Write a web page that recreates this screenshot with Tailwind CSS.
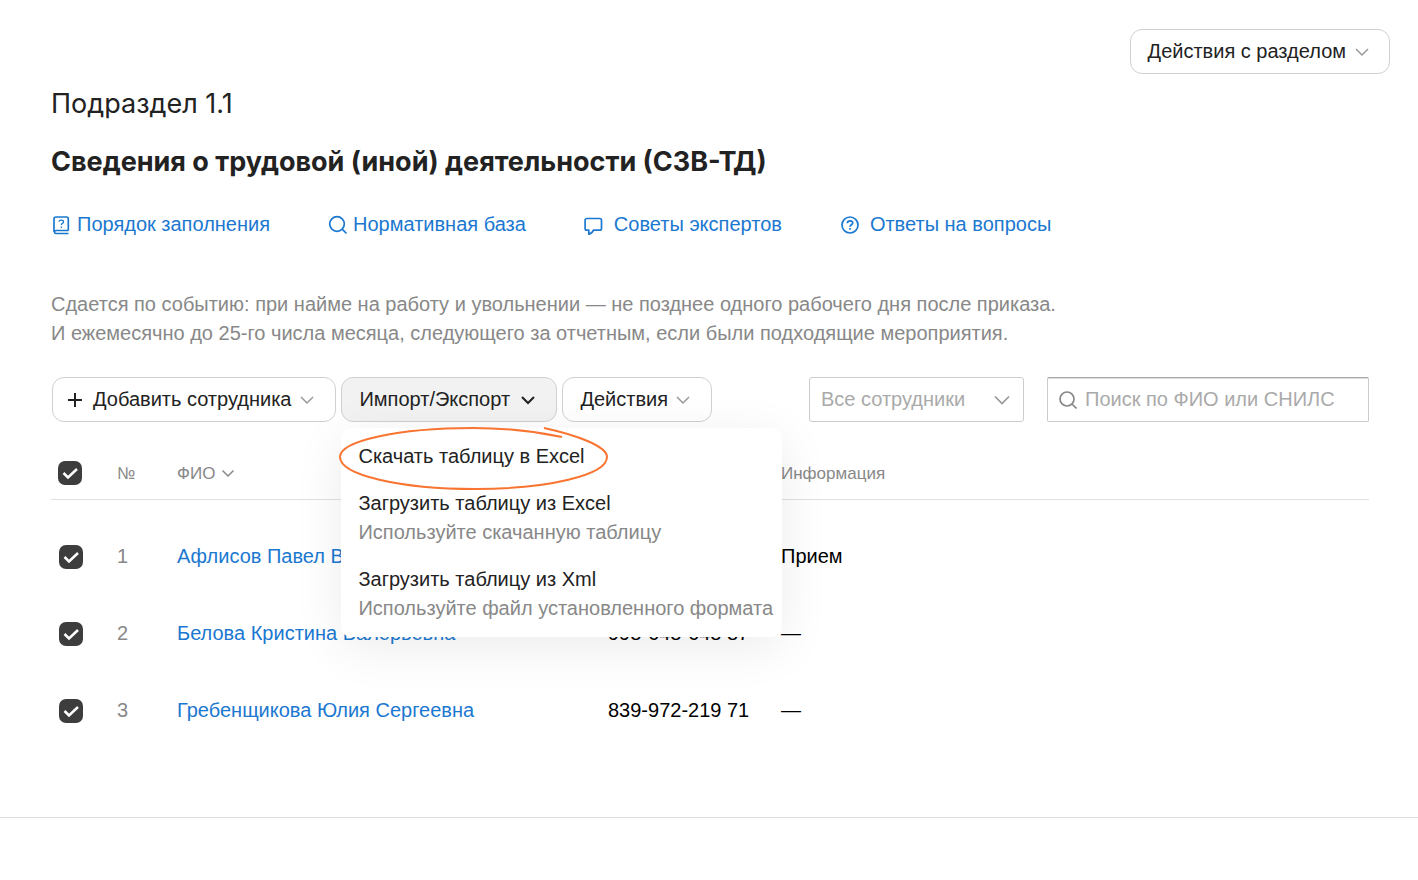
<!DOCTYPE html>
<html lang="ru">
<head>
  <meta charset="UTF-8" />
  <meta name="viewport" content="width=device-width, initial-scale=1.0" />
  <title>Сведения о трудовой (иной) деятельности</title>
  <script src="https://cdn.jsdelivr.net/npm/@tailwindcss/browser@4"></script>
</head>
<body class="bg-white font-['Liberation_Sans',Arial,sans-serif] text-[20px] leading-[29px] text-[#222]">
  <main class="border-b border-[#dcdcdc] pt-[29px] pb-[68px]">
    <div class="flex justify-end pr-7">
      <button type="button" class="flex h-[45px] items-center gap-2 rounded-xl border border-[#d0d0d0] pr-[19px] pb-px pl-[17px]">
        Действия с разделом
        <svg class="mt-[2px] h-4 w-4 text-[#999]" viewBox="0 0 16 16" fill="none" stroke="currentColor" stroke-width="1.5"><path d="M2 5l6 6 6-6" /></svg>
      </button>
    </div>

    <div class="pr-[49px] pl-[51px]">
      <p class="mt-3 font-['Inter',sans-serif] text-[27px] leading-9">Подраздел 1.1</p>
      <h1 class="mt-[22px] font-['Inter',sans-serif] text-[27px] leading-9 font-bold">Сведения о трудовой (иной) деятельности (СЗВ-ТД)</h1>

      <nav class="mt-[30px] flex gap-[58px] text-[#1b78d0]">
        <a href="#" class="flex items-center gap-[6px]">
          <svg class="h-5 w-5" viewBox="0 0 20 20" fill="none" stroke="currentColor" stroke-width="1.7"><path d="M17.500 15.500H5a1.500 1.500 0 0 0 0 3H17.500M3 17V4a2 2 0 0 1 2-2H15.500a1.800 1.800 0 0 1 1.800 1.800V15.500" /><path d="M8 6.700c.2-2 4.500-2 4.500.2 0 1.500-2.200 1.500-2.200 3.200M10.300 11.600v1.500" stroke-width="1.3" /></svg>
          Порядок заполнения
        </a>
        <a href="#" class="flex items-center gap-[5px]">
          <svg class="h-5 w-5" viewBox="0 0 20 20" fill="none" stroke="currentColor" stroke-width="1.7"><circle cx="9" cy="9" r="7.300" /><path d="M14.200 14.200L18.500 18.500" /></svg>
          Нормативная база
        </a>
        <a href="#" class="flex items-center gap-[10px]">
          <svg class="mt-[2px] h-5 w-5" viewBox="0 0 20 20" fill="none" stroke="currentColor" stroke-width="1.7" stroke-linejoin="round"><path d="M2.800 2.500h13a1.700 1.700 0 0 1 1.700 1.700v8.300a1.700 1.700 0 0 1-1.700 1.700H9.500Q8 17.500 4.800 18.200V14.200H2.800a1.700 1.700 0 0 1-1.700-1.700V4.200a1.700 1.700 0 0 1 1.700-1.700z" /></svg>
          Советы экспертов
        </a>
        <a href="#" class="flex items-center gap-[10px]">
          <svg class="h-5 w-5" viewBox="0 0 20 20" fill="none" stroke="currentColor" stroke-width="1.7"><circle cx="10" cy="10" r="8" /><path d="M7.300 8.200c.2-3.300 5.400-3 5.400-.2 0 1.700-2.700 1.800-2.700 3.700M10 13v1.700" /></svg>
          Ответы на вопросы
        </a>
      </nav>

      <p class="mt-[51px] text-[#888]">
        Сдается по событию: при найме на работу и увольнении — не позднее одного рабочего дня после приказа.<br />
        И ежемесячно до 25-го числа месяца, следующего за отчетным, если были подходящие мероприятия.
      </p>

      <div class="mt-[29px] flex items-start gap-[5px] pl-px">
        <button type="button" class="flex h-[45px] items-center rounded-xl border border-[#d0d0d0] pr-5 pl-[14px]">
          <svg class="mr-[10px] h-4 w-4" viewBox="0 0 16 16" fill="none" stroke="currentColor" stroke-width="2"><path d="M8 1v14M1 8h14" /></svg>
          Добавить сотрудника
          <svg class="ml-2 h-4 w-4 text-[#999]" viewBox="0 0 16 16" fill="none" stroke="currentColor" stroke-width="1.5"><path d="M2 5l6 6 6-6" /></svg>
        </button>

        <div class="relative">
          <button type="button" aria-expanded="true" class="flex h-[45px] w-[216px] items-center justify-between rounded-xl border border-[#d0d0d0] bg-[#f2f2f2] pr-5 pl-[17px]">
            Импорт/Экспорт
            <svg class="h-4 w-4" viewBox="0 0 16 16" fill="none" stroke="currentColor" stroke-width="2"><path d="M2 5l6 6 6-6" /></svg>
          </button>
          <div class="absolute top-[51px] left-0 z-10 w-[441px] rounded-[10px] bg-white px-[17px] pt-[14px] pb-[14px] shadow-[0_10px_50px_rgba(0,0,0,0.08)]">
            <a href="#" class="block">Скачать таблицу в Excel</a>
            <a href="#" class="mt-[18px] block">Загрузить таблицу из Excel<span class="block text-[#888]">Используйте скачанную таблицу</span></a>
            <a href="#" class="mt-[18px] block whitespace-nowrap">Загрузить таблицу из Xml<span class="block text-[#888]">Используйте файл установленного формата</span></a>
            <svg class="pointer-events-none absolute -top-[2px] -left-[3px] h-[66px] w-[272px]" viewBox="0 0 272 66" fill="none" stroke="#f97430" stroke-width="2"><path d="M224 11C195 5 165 2 135 2C60 2 2 15 2 31C2 49 62 63 137 63C210 63 269 49 269 31C269 20 238 9 206 2" /></svg>
          </div>
        </div>

        <button type="button" class="flex h-[45px] w-[150px] items-center justify-between rounded-xl border border-[#d0d0d0] pr-5 pl-[17px]">
          Действия
          <svg class="h-4 w-4 text-[#999]" viewBox="0 0 16 16" fill="none" stroke="currentColor" stroke-width="1.5"><path d="M2 5l6 6 6-6" /></svg>
        </button>

        <div class="relative mr-[18px] ml-auto w-[215px]">
          <select aria-label="Сотрудники" class="h-[45px] w-full appearance-none rounded-[3px] border border-[#ccc] bg-white pl-[11px] text-[#aaa]">
            <option>Все сотрудники</option>
          </select>
          <svg class="pointer-events-none absolute top-[15px] right-[14px] h-4 w-4 text-[#999]" viewBox="0 0 16 16" fill="none" stroke="currentColor" stroke-width="1.7"><path d="M1 4.500l7 7 7-7" /></svg>
        </div>
        <label class="flex h-[45px] w-[322px] items-center gap-2 rounded-[2px] border border-[#ccc] border-t-[#aaa] pl-[11px] shadow-[inset_0_1px_0_#ddd]">
          <svg class="h-[18px] w-[18px] shrink-0 text-[#888]" viewBox="0 0 18 18" fill="none" stroke="currentColor" stroke-width="1.7"><circle cx="8" cy="8" r="7" /><path d="M13 13l4.500 4.500" /></svg>
          <input type="text" aria-label="Поиск" placeholder="Поиск по ФИО или СНИЛС" class="w-full min-w-0 outline-none placeholder:text-[#aaa]" />
        </label>
      </div>

      <table class="mt-[26px] w-full table-fixed text-left">
        <thead>
          <tr class="h-[51px] border-b border-[#e0e0e0] text-[17px] text-[#888]">
            <th class="w-[66px] pl-[7px]">
              <span class="relative block h-6 w-6">
                <input type="checkbox" checked aria-label="Выбрать всех" class="block h-6 w-6 appearance-none rounded-[7px] bg-[#3d3d3d]" />
                <svg class="pointer-events-none absolute inset-0 h-6 w-6" viewBox="0 0 24 24" fill="none" stroke="#fff" stroke-width="2.5"><path d="M5.500 12l4.500 4.500L19 8" /></svg>
              </span>
            </th>
            <th class="w-[60px] font-normal">№</th>
            <th class="w-[431px] font-normal">
              <button type="button" class="flex items-center gap-[6px]">
                ФИО
                <svg class="h-[14px] w-[14px]" viewBox="0 0 14 14" fill="none" stroke="currentColor" stroke-width="1.5"><path d="M1.500 4.500L7 10l5.500-5.500" /></svg>
              </button>
            </th>
            <th class="w-[173px] font-normal">СНИЛС</th>
            <th class="font-normal">Информация</th>
          </tr>
        </thead>
        <tbody class="text-black">
          <tr class="h-24">
            <td class="pt-[19px] pl-[8px]">
              <span class="relative block h-6 w-6">
                <input type="checkbox" checked aria-label="Выбрать сотрудника 1" class="block h-6 w-6 appearance-none rounded-[7px] bg-[#3d3d3d]" />
                <svg class="pointer-events-none absolute inset-0 h-6 w-6" viewBox="0 0 24 24" fill="none" stroke="#fff" stroke-width="2.5"><path d="M5.500 12l4.500 4.500L19 8" /></svg>
              </span>
            </td>
            <td class="pt-[19px] text-[#888]">1</td>
            <td class="pt-[19px]"><a href="#" class="text-[#1b78d0]">Афлисов Павел Владимирович</a></td>
            <td class="pt-[19px]">615-218-405 32</td>
            <td class="pt-[19px]">Прием</td>
          </tr>
          <tr class="h-[77px]">
            <td class="pl-[8px]">
              <span class="relative block h-6 w-6">
                <input type="checkbox" checked aria-label="Выбрать сотрудника 2" class="block h-6 w-6 appearance-none rounded-[7px] bg-[#3d3d3d]" />
                <svg class="pointer-events-none absolute inset-0 h-6 w-6" viewBox="0 0 24 24" fill="none" stroke="#fff" stroke-width="2.5"><path d="M5.500 12l4.500 4.500L19 8" /></svg>
              </span>
            </td>
            <td class="text-[#888]">2</td>
            <td><a href="#" class="text-[#1b78d0]">Белова Кристина Валерьевна</a></td>
            <td>998-648-648 87</td>
            <td>—</td>
          </tr>
          <tr class="h-[77px]">
            <td class="pl-[8px]">
              <span class="relative block h-6 w-6">
                <input type="checkbox" checked aria-label="Выбрать сотрудника 3" class="block h-6 w-6 appearance-none rounded-[7px] bg-[#3d3d3d]" />
                <svg class="pointer-events-none absolute inset-0 h-6 w-6" viewBox="0 0 24 24" fill="none" stroke="#fff" stroke-width="2.5"><path d="M5.500 12l4.500 4.500L19 8" /></svg>
              </span>
            </td>
            <td class="text-[#888]">3</td>
            <td><a href="#" class="text-[#1b78d0]">Гребенщикова Юлия Сергеевна</a></td>
            <td>839-972-219 71</td>
            <td>—</td>
          </tr>
        </tbody>
      </table>
    </div>
  </main>
</body>
</html>
